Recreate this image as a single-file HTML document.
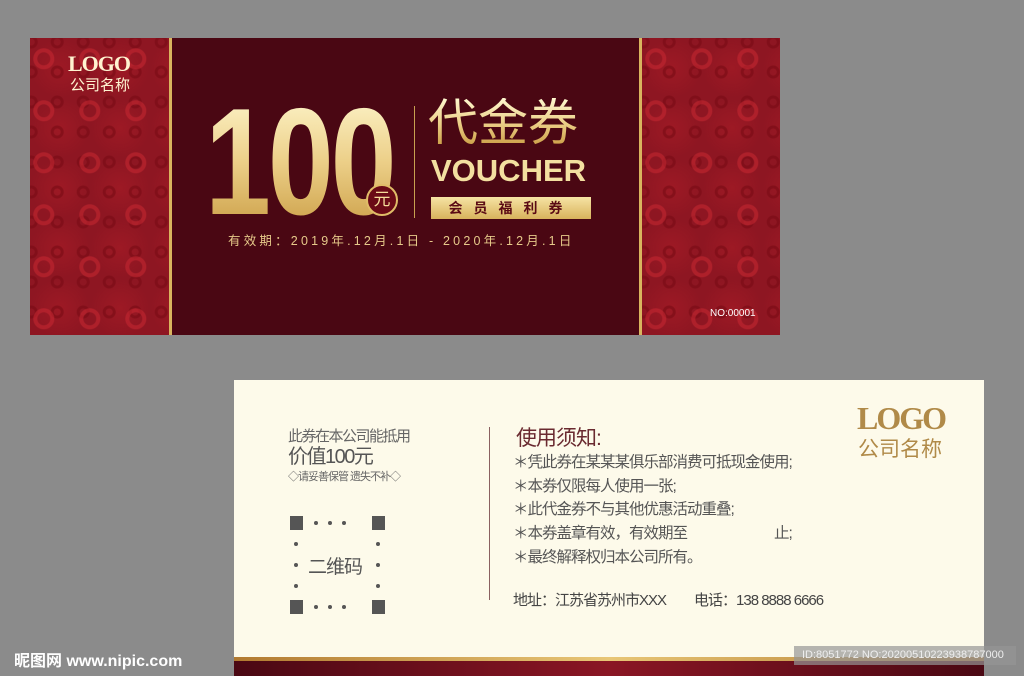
<!DOCTYPE html>
<html><head><meta charset="utf-8"><style>
*{margin:0;padding:0;box-sizing:border-box}
body{width:1024px;height:676px;background:#8b8b8b;position:relative;overflow:hidden;font-family:"Liberation Sans","Noto Sans CJK SC",sans-serif}
.a{position:absolute}
.pat{background-color:#8e1622;background-image:radial-gradient(circle at 30% 40%,transparent 6px,rgba(200,40,50,.55) 7px,rgba(200,40,50,.55) 10px,transparent 11px),radial-gradient(circle at 70% 70%,transparent 3px,rgba(120,10,20,.6) 4px,rgba(120,10,20,.6) 6px,transparent 7px),radial-gradient(circle at 50% 50%,rgba(180,30,40,.4),transparent 70%);background-size:46px 52px,26px 30px,60px 60px;background-position:0 0,9px 13px,0 0}
.gold{background:linear-gradient(180deg,#fff8d0,#eccf88 50%,#c89a40);-webkit-background-clip:text;background-clip:text;color:transparent}
.d{position:absolute;width:4px;height:4px;border-radius:50%;background:#555}
.sq{position:absolute;width:13px;height:14px;background:#555}
</style></head><body>
<div class="a" style="left:30px;top:38px;width:750px;height:297px;background:#4a0713"></div>
<div class="a pat" style="left:30px;top:38px;width:139px;height:297px"></div>
<div class="a pat" style="left:642px;top:38px;width:138px;height:297px"></div>
<div class="a" style="left:169px;top:38px;width:3px;height:297px;background:#d9b45e"></div>
<div class="a" style="left:639px;top:38px;width:3px;height:297px;background:#d9b45e"></div>
<div class="a" style="left:68px;top:51px;color:#fff3d0;font:bold 22px 'Liberation Serif',serif;letter-spacing:-1px">LOGO</div>
<div class="a" style="left:70px;top:74px;color:#fff3d0;font-size:15px">公司名称</div>
<div class="a gold" style="left:205px;top:86px;font:bold 152px/1 'Liberation Sans',sans-serif;letter-spacing:-4px;transform:scaleX(0.78);transform-origin:left">100</div>
<div class="a" style="left:366px;top:184px;width:32px;height:32px;border-radius:50%;background:#6a0a16;border:2px solid #e0bc68;color:#f5dc9a;font-size:17px;text-align:center;line-height:27px">元</div>
<div class="a" style="left:414px;top:106px;width:1px;height:112px;background:#c8a050"></div>
<div class="a gold" style="left:428px;top:98px;font-size:50px;line-height:1">代金券</div>
<div class="a" style="left:431px;top:155px;color:#f3dfa0;font:bold 31px/1 'Liberation Sans',sans-serif">VOUCHER</div>
<div class="a" style="left:431px;top:197px;width:160px;height:22px;background:linear-gradient(#f6e3a4,#d8b35c);color:#5a0a14;font-weight:bold;font-size:14px;text-align:center;line-height:22px;letter-spacing:11px">会员福利券</div>
<div class="a" style="left:228px;top:230px;color:#e6c98a;font-size:12.5px;letter-spacing:3.2px;white-space:nowrap">有效期：2019年.12月.1日 - 2020年.12月.1日</div>
<div class="a" style="left:710px;top:308px;color:#fff;font-size:10px">NO:00001</div>

<div class="a" style="left:234px;top:380px;width:750px;height:296px;background:#fdfaea"></div>
<div class="a" style="left:234px;top:657px;width:750px;height:4px;background:linear-gradient(90deg,#b27a30,#e8c676,#b27a30)"></div>
<div class="a" style="left:234px;top:661px;width:750px;height:15px;background:linear-gradient(90deg,#4a0813,#8a1624 50%,#4a0813)"></div>
<div class="a" style="left:288px;top:425px;color:#666;font-size:15px;letter-spacing:-1.5px">此券在本公司能抵用</div>
<div class="a" style="left:288px;top:440px;color:#555;font-size:20px;letter-spacing:-1.5px">价值100元</div>
<div class="a" style="left:288px;top:468px;color:#666;font-size:11px;letter-spacing:-1px">◇请妥善保管 遗失不补◇</div>
<div class="a" style="left:290px;top:516px;width:96px;height:98px">
<div class="sq" style="left:0;top:0"></div><div class="sq" style="left:82px;top:0"></div>
<div class="sq" style="left:0;top:84px"></div><div class="sq" style="left:82px;top:84px"></div>
<div class="d" style="left:24px;top:5px"></div><div class="d" style="left:38px;top:5px"></div><div class="d" style="left:52px;top:5px"></div>
<div class="d" style="left:24px;top:89px"></div><div class="d" style="left:38px;top:89px"></div><div class="d" style="left:52px;top:89px"></div>
<div class="d" style="left:4px;top:26px"></div><div class="d" style="left:4px;top:47px"></div><div class="d" style="left:4px;top:68px"></div>
<div class="d" style="left:86px;top:26px"></div><div class="d" style="left:86px;top:47px"></div><div class="d" style="left:86px;top:68px"></div>
<div class="a" style="left:18px;top:36px;color:#555;font-size:19px;letter-spacing:-1px">二维码</div>
</div>
<div class="a" style="left:489px;top:427px;width:1px;height:173px;background:#8a6060"></div>
<div class="a" style="left:516px;top:422px;color:#6a2a30;font-size:21px;letter-spacing:-1px">使用须知:</div>
<div class="a" style="left:513px;top:451px;color:#555;font-size:15.5px;line-height:23.7px;letter-spacing:-1px">＊凭此券在某某某俱乐部消费可抵现金使用;<br>＊本券仅限每人使用一张;<br>＊此代金券不与其他优惠活动重叠;<br>＊本券盖章有效，有效期至　　　　　　止;<br>＊最终解释权归本公司所有。</div>
<div class="a" style="left:513px;top:589px;color:#444;font-size:15px;letter-spacing:-1px;white-space:nowrap">地址：江苏省苏州市XXX　　电话：138 8888 6666</div>
<div class="a" style="left:857px;top:400px;color:#b08a48;font:bold 32px 'Liberation Serif',serif;letter-spacing:-2px">LOGO</div>
<div class="a" style="left:858px;top:433px;color:#b08a48;font-size:21px">公司名称</div>
<div class="a" style="left:794px;top:646px;width:222px;height:19px;background:rgba(150,150,150,.7);color:#eee;font-size:11px;line-height:19px;padding-left:8px;white-space:nowrap;overflow:hidden">ID:8051772 NO:20200510223938787000</div>
<div class="a" style="left:14px;top:647px;color:#fff;font-weight:bold;font-size:16px;white-space:nowrap">昵图网 www.nipic.com</div>
</body></html>
